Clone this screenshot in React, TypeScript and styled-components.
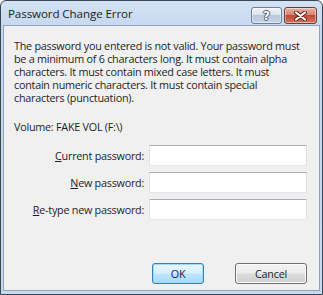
import React from "react";
import styled, { createGlobalStyle } from "styled-components";

const Global = createGlobalStyle`
  html, body { margin: 0; padding: 0; background: #ffffff; }
  body { font-family: "Open Sans", "Noto Sans", sans-serif; }
`;

const Window = styled.div`
  width: 323px;
  height: 295px;
  box-sizing: border-box;
  border: 1px solid #3b4655;
  border-radius: 6px 6px 0 0;
  background: linear-gradient(180deg, #d3e2f3 0%, #c3d7ee 10%, #c7daef 100%);
  display: flex;
  flex-direction: column;
  padding: 0 2px 3px 2px;
  overflow: hidden;
`;

const TitleBar = styled.div`
  height: 24px;
  display: flex;
  align-items: center;
  padding-left: 5px;
  padding-right: 3px;
  flex-shrink: 0;
`;

const Title = styled.div`
  flex: 1;
  font-size: 11.6px;
  letter-spacing: -0.1px;
  color: #1c1c1c;
  padding-top: 1px;
`;

const CaptionGroup = styled.div`
  display: flex;
  gap: 2px;
  align-self: flex-start;
  margin-top: 6px;
`;

const CaptionButton = styled.div<{ $variant: "help" | "close" }>`
  width: ${(p) => (p.$variant === "help" ? "29px" : "31px")};
  height: 15px;
  border: 1px solid ${(p) => (p.$variant === "help" ? "#6e7f95" : "#6e3b33")};
  border-radius: 3px;
  display: flex;
  align-items: center;
  justify-content: center;
  background: ${(p) =>
    p.$variant === "help"
      ? "linear-gradient(180deg, #f0f4f9 0%, #d9e3ee 45%, #b7c7da 50%, #c8d6e6 100%)"
      : "linear-gradient(180deg, #eab1a2 0%, #d98370 45%, #c04a35 50%, #d0735c 100%)"};
  box-shadow: inset 0 0 0 1px rgba(255, 255, 255, 0.45);
`;

const HelpGlyph = styled.span`
  font-family: "DejaVu Sans", sans-serif;
  font-weight: bold;
  font-size: 12px;
  line-height: 1;
  color: #ffffff;
  text-shadow: 1px 0 0 #4a5a70, -1px 0 0 #4a5a70, 0 1px 0 #4a5a70, 0 -1px 0 #4a5a70;
`;

const Client = styled.div`
  flex: 1;
  background: #f0f0f0;
  border: 1px solid #8fa4bc;
  display: flex;
  flex-direction: column;
  padding: 13px 12px 6px 10px;
  font-size: 10.8px;
  letter-spacing: -0.25px;
  color: #1e1e1e;
`;

const Message = styled.p`
  margin: 0;
  line-height: 13px;
  white-space: nowrap;
`;

const Volume = styled.p`
  margin: 16px 0 0 0;
  line-height: 13px;
`;

const Form = styled.div`
  display: grid;
  grid-template-columns: 1fr 158px;
  column-gap: 5px;
  row-gap: 6px;
  margin-top: 12px;
  align-items: center;
`;

const Label = styled.label`
  text-align: right;
  line-height: 13px;
  white-space: nowrap;
  u { text-decoration: underline; text-underline-offset: 1px; }
`;

const Input = styled.div`
  height: 21px;
  box-sizing: border-box;
  background: #ffffff;
  border: 1px solid #e3e9ef;
  border-top-color: #abadb3;
  border-left-color: #e2e3ea;
  border-right-color: #dbdfe6;
`;

const Footer = styled.div`
  margin-top: auto;
  display: flex;
  justify-content: flex-end;
  gap: 31px;
`;

const Button = styled.div<{ $primary?: boolean; $w: number }>`
  width: ${(p) => p.$w}px;
  height: 21px;
  box-sizing: border-box;
  border-radius: 3px;
  border: 1px solid ${(p) => (p.$primary ? "#3c7fb1" : "#707070")};
  background: ${(p) =>
    p.$primary
      ? "linear-gradient(180deg, #eaf6fd 0%, #d9f0fc 48%, #bee6fd 52%, #a7d9f5 100%)"
      : "linear-gradient(180deg, #f2f2f2 0%, #ebebeb 48%, #dddddd 52%, #cfcfcf 100%)"};
  box-shadow: ${(p) =>
    p.$primary ? "inset 0 0 0 1px #9ddcf8" : "inset 0 0 0 1px #fcfcfc"};
  display: flex;
  align-items: center;
  justify-content: center;
  line-height: 13px;
`;

export default function App() {
  return (
    <>
      <Global />
      <Window>
        <TitleBar>
          <Title>Password Change Error</Title>
          <CaptionGroup>
            <CaptionButton $variant="help">
              <HelpGlyph>?</HelpGlyph>
            </CaptionButton>
            <CaptionButton $variant="close">
              <svg width="13" height="10" viewBox="0 0 13 10">
                <path
                  d="M2 1.5 L11 8.5 M11 1.5 L2 8.5"
                  stroke="#5a2018"
                  strokeWidth="4"
                  strokeLinecap="round"
                />
                <path
                  d="M2 1.5 L11 8.5 M11 1.5 L2 8.5"
                  stroke="#ffffff"
                  strokeWidth="2.2"
                  strokeLinecap="round"
                />
              </svg>
            </CaptionButton>
          </CaptionGroup>
        </TitleBar>
        <Client>
          <Message>
            The password you entered is not valid. Your password must
            <br />
            be a minimum of 6 characters long. It must contain alpha
            <br />
            characters. It must contain mixed case letters. It must
            <br />
            contain numeric characters. It must contain special
            <br />
            characters (punctuation).
          </Message>
          <Volume>Volume: FAKE VOL (F:\)</Volume>
          <Form>
            <Label>
              <u>C</u>urrent password:
            </Label>
            <Input />
            <Label>
              <u>N</u>ew password:
            </Label>
            <Input />
            <Label>
              <u>R</u>e-type new password:
            </Label>
            <Input />
          </Form>
          <Footer>
            <Button $primary $w={52}>OK</Button>
            <Button $w={72}>Cancel</Button>
          </Footer>
        </Client>
      </Window>
    </>
  );
}
